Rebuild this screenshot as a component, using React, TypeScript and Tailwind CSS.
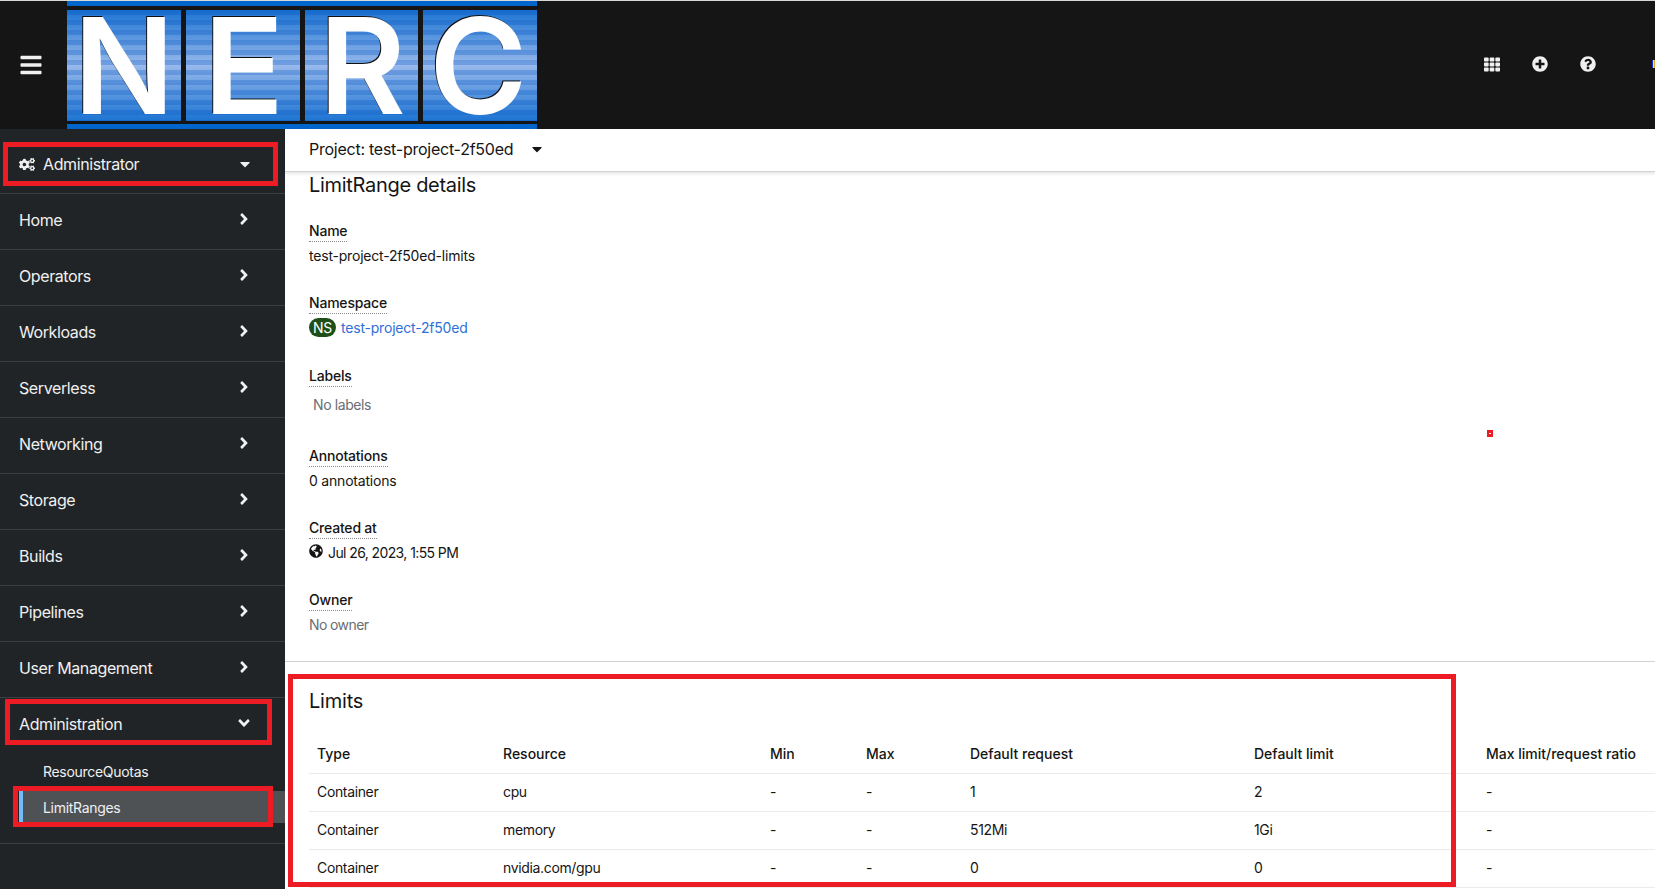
import React from "react";
import {
  FaBars,
  FaTh,
  FaPlusCircle,
  FaQuestionCircle,
  FaCogs,
  FaCaretDown,
  FaAngleRight,
  FaAngleDown,
  FaGlobeAmericas,
} from "react-icons/fa";

const navItems = ["Home", "Operators", "Workloads", "Serverless", "Networking", "Storage", "Builds", "Pipelines", "User Management"];

const rows = [
  ["Container", "cpu", "-", "-", "1", "2", "-"],
  ["Container", "memory", "-", "-", "512Mi", "1Gi", "-"],
  ["Container", "nvidia.com/gpu", "-", "-", "0", "0", "-"],
];
const headers = ["Type", "Resource", "Min", "Max", "Default request", "Default limit", "Max limit/request ratio"];

function Tile({ letter, className }: { letter: string; className: string }) {
  return (
    <div className="flex h-[111px] w-[114px] items-center justify-center bg-[repeating-linear-gradient(180deg,rgba(0,80,190,0.25)_0_5px,transparent_5px_10px),linear-gradient(180deg,#1d74d2,#98b9ec_50%,#1d74d2)]">
      <span className={"text-[133px] leading-[111px] font-semibold text-white [text-shadow:-1px_-1px_0_#111] " + className}>{letter}</span>
    </div>
  );
}

function Logo() {
  return (
    <div className="flex h-[128px] w-[470px] flex-col justify-between bg-[#151515]">
      <div className="h-[5px] bg-[#0066cc]" />
      <div className="flex gap-[5px]">
        <Tile letter="N" className="translate-x-[0px]" />
        <Tile letter="E" className="translate-x-[1px]" />
        <Tile letter="R" className="translate-x-[1px]" />
        <Tile letter="C" className="translate-x-[-2px]" />
      </div>
      <div className="h-[5px] bg-[#0066cc]" />
    </div>
  );
}

function Field({ label, children, className = "" }: { label: string; children: React.ReactNode; className?: string }) {
  return (
    <div className={"flex flex-col " + className}>
      <div className="h-[24px] leading-[24px] font-medium text-[#151515]">
        <span className="inline-block h-[23px] border-b border-dotted border-[#8a8d90]">{label}</span>
      </div>
      {children}
    </div>
  );
}

export default function App() {
  return (
    <div className="relative flex h-[889px] w-[1655px] flex-col overflow-hidden bg-white font-['Inter',sans-serif] text-[14px] tracking-[-0.2px] text-[#151515]">
      <div className="h-px bg-[#d8d8d8]" />
      <header className="flex h-[128px] items-center bg-[#151515] text-[#f0f0f0]">
        <div className="flex w-[67px] justify-center">
          <FaBars className="mr-[5px] h-[24px] w-[22px]" />
        </div>
        <Logo />
        <div className="mb-[2px] ml-auto flex items-center">
          <FaTh className="mr-[32px] h-[17px] w-[16px]" />
          <FaPlusCircle className="mr-[32px] h-[16px] w-[16px]" />
          <FaQuestionCircle className="mr-[56px] h-[16px] w-[16px]" />
          <div className="h-[8px] w-[3px] bg-[linear-gradient(90deg,#1a2fd0_33%,#e8e4c8_33%_66%,#e0a020_66%)]" />
        </div>
      </header>

      <div className="flex min-h-0 flex-1">
        <aside className="flex w-[285px] shrink-0 flex-col bg-[#212427] text-[16px] tracking-[-0.4px] text-[#f0f0f0]">
          <div className="flex h-[65px] shrink-0 items-center border-b border-[#3c3f42] pt-[6px] pr-[34px] pl-[19px]">
            <FaCogs className="mr-[8px] h-[15px] w-[16px]" />
            <span>Administrator</span>
            <FaCaretDown className="ml-auto h-[16px] w-[12px]" />
          </div>
          {navItems.map((n) => (
            <div key={n} className="flex h-[56px] shrink-0 items-center border-b border-[#3c3f42] pr-[35px] pb-[3px] pl-[19px]">
              <span>{n}</span>
              <FaAngleRight className="mb-[2px] ml-auto h-[18px] w-[12px]" />
            </div>
          ))}
          <div className="flex h-[54px] shrink-0 items-center pr-[34px] pb-[2px] pl-[19px]">
            <span>Administration</span>
            <FaAngleDown className="mb-[2px] ml-auto h-[18px] w-[14px]" />
          </div>
          <div className="flex h-[92px] shrink-0 flex-col border-b border-[#3c3f42] text-[14px] tracking-[-0.3px]">
            <div className="flex h-[38px] items-center pl-[43px]">ResourceQuotas</div>
            <div className="mt-px ml-[19px] flex h-[32px] items-center border-l-4 border-[#73bcf7] bg-[#4f5255] pl-[20px]">LimitRanges</div>
          </div>
        </aside>

        <main className="flex min-w-0 flex-1 flex-col">
          <div className="flex h-[43px] shrink-0 items-center border-b border-[#d2d2d2] pb-[2px] pl-[24px] text-[16px] tracking-[-0.25px] shadow-[0_2px_3px_rgba(0,0,0,0.1)]">
            <span>Project: test-project-2f50ed</span>
            <FaCaretDown className="ml-[18px] h-[16px] w-[12px]" />
          </div>
          <section className="h-[490px] shrink-0 border-b border-[#d2d2d2] pl-[24px]">
            <h1 className="mt-[-1px] mb-[20px] h-[28px] text-[20px] leading-[28px] font-normal tracking-[-0.3px]">LimitRange details</h1>
            <Field label="Name" className="h-[72px]">
              <div className="mt-px leading-[24px]">test-project-2f50ed-limits</div>
            </Field>
            <Field label="Namespace" className="h-[73px]">
              <div className="flex h-[24px] items-center">
                <span className="mr-[5px] flex h-[19px] w-[27px] items-center justify-center rounded-full bg-[#1e4f18] text-white">NS</span>
                <span className="text-[#2f6fd8]">test-project-2f50ed</span>
              </div>
            </Field>
            <Field label="Labels" className="h-[80px]">
              <div className="mt-[5px] pl-[4px] leading-[24px] tracking-[-0.4px] text-[#6a6e73]">No labels</div>
            </Field>
            <Field label="Annotations" className="h-[72px]">
              <div className="mt-px leading-[24px]">0 annotations</div>
            </Field>
            <Field label="Created at" className="h-[72px]">
              <div className="flex h-[24px] items-center">
                <FaGlobeAmericas className="mr-[5px] mb-[3px] h-[14px] w-[14px]" />
                <span className="tracking-[-0.6px]">Jul 26, 2023, 1:55 PM</span>
              </div>
            </Field>
            <Field label="Owner" className="h-[60px]">
              <div className="mt-px leading-[24px] tracking-[-0.6px] text-[#6a6e73]">No owner</div>
            </Field>
          </section>
          <section className="pl-[24px]">
            <h2 className="mt-[25px] mb-[20px] h-[28px] text-[20px] leading-[28px] font-normal">Limits</h2>
            <table className="w-[1346px] table-fixed border-collapse">
              <colgroup>
                <col className="w-[186px]" />
                <col className="w-[267px]" />
                <col className="w-[96px]" />
                <col className="w-[104px]" />
                <col className="w-[284px]" />
                <col className="w-[232px]" />
                <col className="w-[177px]" />
              </colgroup>
              <thead>
                <tr className="h-[38px] border-b border-[#ebebeb]">
                  {headers.map((h) => (
                    <th key={h} className="pl-[8px] text-left font-medium tracking-normal whitespace-nowrap">{h}</th>
                  ))}
                </tr>
              </thead>
              <tbody>
                {rows.map((r, i) => (
                  <tr key={i} className="h-[38px] border-b border-[#ebebeb]">
                    {r.map((c, j) => (
                      <td key={j} className="pb-[2px] pl-[8px] tracking-[-0.35px]">{c}</td>
                    ))}
                  </tr>
                ))}
              </tbody>
            </table>
          </section>
        </main>
      </div>

      {/* red annotation boxes over the screenshot */}
      <div className="absolute top-[142px] left-[3px] h-[44px] w-[275px] border-[5px] border-[#ed1c24]" />
      <div className="absolute top-[699px] left-[5px] h-[46px] w-[267px] border-[5px] border-[#ed1c24]" />
      <div className="absolute top-[786px] left-[13px] h-[41px] w-[260px] border-[5px] border-[#ed1c24]" />
      <div className="absolute top-[674px] left-[288px] h-[213px] w-[1168px] border-[5px] border-[#ed1c24]" />
      <div className="absolute top-[430px] left-[1487px] flex h-[7px] w-[6px] items-center justify-center bg-[#ed1c24]">
        <div className="h-px w-[2px] bg-white" />
      </div>
    </div>
  );
}
